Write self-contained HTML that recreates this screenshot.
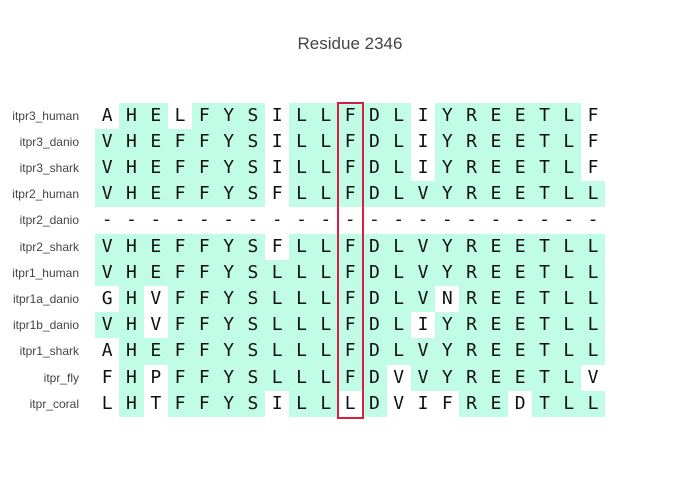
<!DOCTYPE html>
<html><head><meta charset="utf-8"><style>
body{margin:0;width:700px;height:500px;background:#fff;position:relative;overflow:hidden;font-family:"Liberation Sans",sans-serif}
.title{position:absolute;top:34px;left:0;width:700px;text-align:center;font-size:17px;color:#444}
.row{position:absolute;left:0;height:26.2px;width:700px}
.lab{position:absolute;right:621px;top:0;line-height:26.2px;font-size:12px;color:#444;white-space:nowrap}
.cells{position:absolute;left:95px;top:0;display:flex}
.cells i{font-style:normal;display:block;width:24.3px;height:26.2px;line-height:26.2px;text-align:center;font-family:"DejaVu Sans Mono","Liberation Mono",monospace;font-size:18px;color:#111}
.cells i.t{background:#c0fce6}
.box{position:absolute;left:337px;top:102px;width:23px;height:313px;border:2px solid #d81e43}
</style></head><body>
<div class="title">Residue 2346</div>

<div class="row" style="top:102.6px"><span class="lab">itpr3_human</span><div class="cells"><i>A</i><i class="t">H</i><i class="t">E</i><i>L</i><i class="t">F</i><i class="t">Y</i><i class="t">S</i><i>I</i><i class="t">L</i><i class="t">L</i><i class="t">F</i><i class="t">D</i><i class="t">L</i><i>I</i><i class="t">Y</i><i class="t">R</i><i class="t">E</i><i class="t">E</i><i class="t">T</i><i class="t">L</i><i>F</i></div></div>

<div class="row" style="top:128.8px"><span class="lab">itpr3_danio</span><div class="cells"><i class="t">V</i><i class="t">H</i><i class="t">E</i><i class="t">F</i><i class="t">F</i><i class="t">Y</i><i class="t">S</i><i>I</i><i class="t">L</i><i class="t">L</i><i class="t">F</i><i class="t">D</i><i class="t">L</i><i>I</i><i class="t">Y</i><i class="t">R</i><i class="t">E</i><i class="t">E</i><i class="t">T</i><i class="t">L</i><i>F</i></div></div>

<div class="row" style="top:155px"><span class="lab">itpr3_shark</span><div class="cells"><i class="t">V</i><i class="t">H</i><i class="t">E</i><i class="t">F</i><i class="t">F</i><i class="t">Y</i><i class="t">S</i><i>I</i><i class="t">L</i><i class="t">L</i><i class="t">F</i><i class="t">D</i><i class="t">L</i><i>I</i><i class="t">Y</i><i class="t">R</i><i class="t">E</i><i class="t">E</i><i class="t">T</i><i class="t">L</i><i>F</i></div></div>

<div class="row" style="top:181.2px"><span class="lab">itpr2_human</span><div class="cells"><i class="t">V</i><i class="t">H</i><i class="t">E</i><i class="t">F</i><i class="t">F</i><i class="t">Y</i><i class="t">S</i><i>F</i><i class="t">L</i><i class="t">L</i><i class="t">F</i><i class="t">D</i><i class="t">L</i><i class="t">V</i><i class="t">Y</i><i class="t">R</i><i class="t">E</i><i class="t">E</i><i class="t">T</i><i class="t">L</i><i class="t">L</i></div></div>

<div class="row" style="top:207.4px"><span class="lab">itpr2_danio</span><div class="cells"><i>-</i><i>-</i><i>-</i><i>-</i><i>-</i><i>-</i><i>-</i><i>-</i><i>-</i><i>-</i><i>-</i><i>-</i><i>-</i><i>-</i><i>-</i><i>-</i><i>-</i><i>-</i><i>-</i><i>-</i><i>-</i></div></div>

<div class="row" style="top:233.6px"><span class="lab">itpr2_shark</span><div class="cells"><i class="t">V</i><i class="t">H</i><i class="t">E</i><i class="t">F</i><i class="t">F</i><i class="t">Y</i><i class="t">S</i><i>F</i><i class="t">L</i><i class="t">L</i><i class="t">F</i><i class="t">D</i><i class="t">L</i><i class="t">V</i><i class="t">Y</i><i class="t">R</i><i class="t">E</i><i class="t">E</i><i class="t">T</i><i class="t">L</i><i class="t">L</i></div></div>

<div class="row" style="top:259.8px"><span class="lab">itpr1_human</span><div class="cells"><i class="t">V</i><i class="t">H</i><i class="t">E</i><i class="t">F</i><i class="t">F</i><i class="t">Y</i><i class="t">S</i><i class="t">L</i><i class="t">L</i><i class="t">L</i><i class="t">F</i><i class="t">D</i><i class="t">L</i><i class="t">V</i><i class="t">Y</i><i class="t">R</i><i class="t">E</i><i class="t">E</i><i class="t">T</i><i class="t">L</i><i class="t">L</i></div></div>

<div class="row" style="top:286px"><span class="lab">itpr1a_danio</span><div class="cells"><i>G</i><i class="t">H</i><i>V</i><i class="t">F</i><i class="t">F</i><i class="t">Y</i><i class="t">S</i><i class="t">L</i><i class="t">L</i><i class="t">L</i><i class="t">F</i><i class="t">D</i><i class="t">L</i><i class="t">V</i><i>N</i><i class="t">R</i><i class="t">E</i><i class="t">E</i><i class="t">T</i><i class="t">L</i><i class="t">L</i></div></div>

<div class="row" style="top:312.2px"><span class="lab">itpr1b_danio</span><div class="cells"><i class="t">V</i><i class="t">H</i><i>V</i><i class="t">F</i><i class="t">F</i><i class="t">Y</i><i class="t">S</i><i class="t">L</i><i class="t">L</i><i class="t">L</i><i class="t">F</i><i class="t">D</i><i class="t">L</i><i>I</i><i class="t">Y</i><i class="t">R</i><i class="t">E</i><i class="t">E</i><i class="t">T</i><i class="t">L</i><i class="t">L</i></div></div>

<div class="row" style="top:338.4px"><span class="lab">itpr1_shark</span><div class="cells"><i>A</i><i class="t">H</i><i class="t">E</i><i class="t">F</i><i class="t">F</i><i class="t">Y</i><i class="t">S</i><i class="t">L</i><i class="t">L</i><i class="t">L</i><i class="t">F</i><i class="t">D</i><i class="t">L</i><i class="t">V</i><i class="t">Y</i><i class="t">R</i><i class="t">E</i><i class="t">E</i><i class="t">T</i><i class="t">L</i><i class="t">L</i></div></div>

<div class="row" style="top:364.6px"><span class="lab">itpr_fly</span><div class="cells"><i>F</i><i class="t">H</i><i>P</i><i class="t">F</i><i class="t">F</i><i class="t">Y</i><i class="t">S</i><i class="t">L</i><i class="t">L</i><i class="t">L</i><i class="t">F</i><i class="t">D</i><i>V</i><i class="t">V</i><i class="t">Y</i><i class="t">R</i><i class="t">E</i><i class="t">E</i><i class="t">T</i><i class="t">L</i><i>V</i></div></div>

<div class="row" style="top:390.8px"><span class="lab">itpr_coral</span><div class="cells"><i>L</i><i class="t">H</i><i>T</i><i class="t">F</i><i class="t">F</i><i class="t">Y</i><i class="t">S</i><i>I</i><i class="t">L</i><i class="t">L</i><i>L</i><i class="t">D</i><i>V</i><i>I</i><i>F</i><i class="t">R</i><i class="t">E</i><i>D</i><i class="t">T</i><i class="t">L</i><i class="t">L</i></div></div>

<div class="box"></div>
</body></html>
